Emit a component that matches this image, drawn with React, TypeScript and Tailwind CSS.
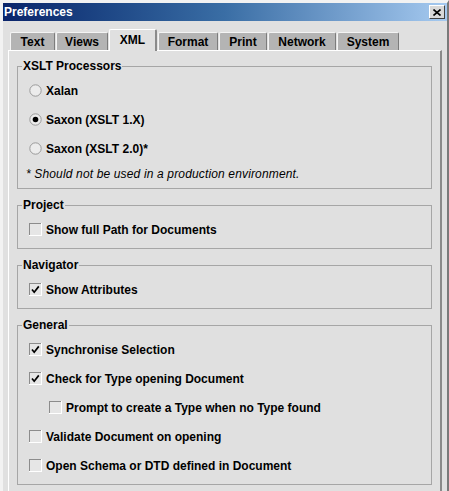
import React from 'react';

const tabs = [
  { label: 'Text', w: 'w-[45px]' },
  { label: 'Views', w: 'w-[52px]' },
  { label: 'XML', w: 'w-[48px]', active: true },
  { label: 'Format', w: 'w-[60px]' },
  { label: 'Print', w: 'w-[48px]' },
  { label: 'Network', w: 'w-[68px]' },
  { label: 'System', w: 'w-[62px]' },
];

const Check: React.FC<{ checked?: boolean }> = ({ checked }) => (
  <svg width="13" height="13" viewBox="0 0 13 13" className="shrink-0">
    <rect x="0" y="0" width="13" height="13" fill="#ffffff" />
    <rect x="0" y="0" width="12" height="12" fill="#8c8c8c" />
    <rect x="1" y="1" width="11" height="11" fill="#e6e6e6" />
    {checked && (
      <path d="M3 6.5 L5.2 9.2 L9.8 3.4" fill="none" stroke="#000" strokeWidth="1.7" />
    )}
  </svg>
);

const Radio: React.FC<{ checked?: boolean }> = ({ checked }) => (
  <svg width="13" height="13" viewBox="0 0 13 13" className="shrink-0">
    <circle cx="6.5" cy="6.5" r="5.7" fill="#ececec" stroke="#9a9a9a" strokeWidth="1" />
    {checked && <circle cx="6.5" cy="6.5" r="2.8" fill="#000" />}
  </svg>
);

const Group: React.FC<{ title: string; children: React.ReactNode }> = ({ title, children }) => (
  <fieldset className="border border-[#a6a6a6] pb-[4px]">
    <legend className="ml-[4px] px-[1px] text-[12px] leading-[14px] font-bold text-black">{title}</legend>
    <div className="pt-[3px]">{children}</div>
  </fieldset>
);

const Row: React.FC<{ children: React.ReactNode; indent?: boolean }> = ({ children, indent }) => (
  <div className={`flex items-center h-[29px] gap-[4px] ${indent ? 'pl-[31px]' : 'pl-[11px]'}`}>
    {children}
  </div>
);

const Label: React.FC<{ children: React.ReactNode }> = ({ children }) => (
  <span className="text-[12px] leading-[14px] font-bold text-black whitespace-nowrap">{children}</span>
);

export default function App() {
  return (
    <div className="w-[449px] h-[491px] overflow-hidden flex flex-col bg-[#e0e0e0] border-t-[3px] border-l-[3px] border-t-[#f2f2f2] border-l-[#f2f2f2] border-r-[2px] border-r-[#7a7a7a] font-['Liberation_Sans',Arial,sans-serif]">
      {/* title bar */}
      <div className="h-[18px] shrink-0 flex items-center justify-between pl-[1px] pr-[2px] bg-linear-to-r from-[#0a246a] via-[#3a6ea5] to-[#a6caf0]">
        <span className="text-[12px] leading-[14px] font-bold text-white">Preferences</span>
        <div className="w-[16px] h-[14px] bg-[#d8d8d8] border-t border-l border-t-white border-l-white border-b border-r border-b-[#404040] border-r-[#404040] flex items-center justify-center">
          <svg width="8" height="7" viewBox="0 0 8 7">
            <path d="M0.5 0.5 L7.5 6.5 M7.5 0.5 L0.5 6.5" stroke="#000" strokeWidth="1.6" />
          </svg>
        </div>
      </div>

      {/* tabs */}
      <div className="flex items-end gap-[1px] pl-[7px] mt-[8px] h-[21px] shrink-0">
        {tabs.map((t) =>
          t.active ? (
            <div
              key={t.label}
              className={`${t.w} h-[22px] -mb-[1px] relative z-10 bg-[#e0e0e0] border-t border-l border-t-white border-l-white border-r-2 border-r-[#8a8a8a] rounded-t-[2px] flex items-center justify-center pb-[2px]`}
            >
              <span className="text-[12px] leading-[14px] font-bold text-black">{t.label}</span>
            </div>
          ) : (
            <div
              key={t.label}
              className={`${t.w} h-[18px] bg-[#b4b4b4] border-t border-l border-t-[#f4f4f4] border-l-[#f4f4f4] border-r border-r-[#7c7c7c] rounded-t-[2px] flex items-center justify-center`}
            >
              <span className="text-[12px] leading-[14px] font-bold text-black">{t.label}</span>
            </div>
          )
        )}
      </div>

      {/* panel */}
      <div className="flex-1 ml-[5px] mr-[5px] border-t border-l border-t-white border-l-white border-r-2 border-r-[#8a8a8a] pl-[8px] pr-[8px] pt-[8px] flex flex-col gap-[9px]">
        <Group title="XSLT Processors">
          <Row>
            <Radio />
            <Label>Xalan</Label>
          </Row>
          <Row>
            <Radio checked />
            <Label>Saxon (XSLT 1.X)</Label>
          </Row>
          <Row>
            <Radio />
            <Label>Saxon (XSLT 2.0)*</Label>
          </Row>
          <div className="h-[21px] flex items-center pl-[8px]">
            <span className="text-[12px] leading-[14px] italic tracking-[0.15px] text-black whitespace-nowrap">
              * Should not be used in a production environment.
            </span>
          </div>
        </Group>

        <Group title="Project">
          <Row>
            <Check />
            <Label>Show full Path for Documents</Label>
          </Row>
        </Group>

        <Group title="Navigator">
          <Row>
            <Check checked />
            <Label>Show Attributes</Label>
          </Row>
        </Group>

        <Group title="General">
          <Row>
            <Check checked />
            <Label>Synchronise Selection</Label>
          </Row>
          <Row>
            <Check checked />
            <Label>Check for Type opening Document</Label>
          </Row>
          <Row indent>
            <Check />
            <Label>Prompt to create a Type when no Type found</Label>
          </Row>
          <Row>
            <Check />
            <Label>Validate Document on opening</Label>
          </Row>
          <Row>
            <Check />
            <Label>Open Schema or DTD defined in Document</Label>
          </Row>
        </Group>
      </div>
    </div>
  );
}
